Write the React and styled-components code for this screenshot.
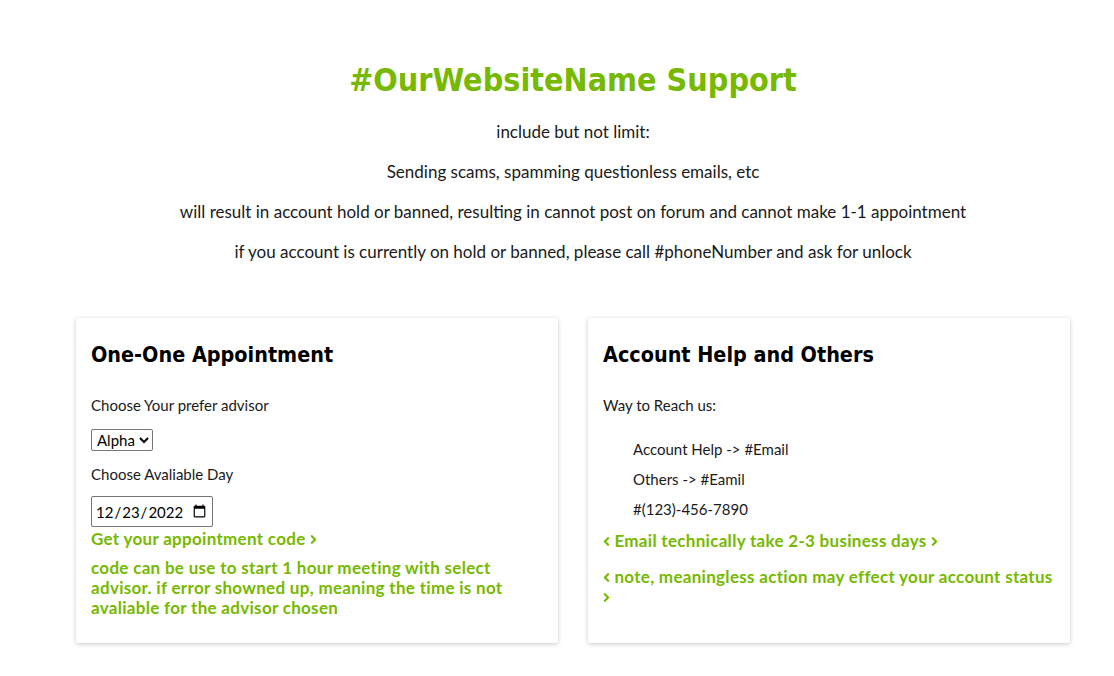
import React from 'react';
import styled, { createGlobalStyle } from 'styled-components';
import { ChevronLeft, ChevronRight } from 'lucide-react';

const GlobalStyle = createGlobalStyle`
  body {
    margin: 0;
    background: #fff;
    font-family: Lato, "Open Sans", sans-serif;
    color: #1a1a1a;
  }
`;

const GREEN = '#76b900';

export default function App() {
  return (
    <Page>
      <GlobalStyle />
      <Main>
        <Intro>
          <Title>#OurWebsiteName Support</Title>
          <Note>include but not limit:</Note>
          <Note>Sending scams, spamming questionless emails, etc</Note>
          <Note>will result in account hold or banned, resulting in cannot post on forum and cannot make 1-1 appointment</Note>
          <Note>if you account is currently on hold or banned, please call #phoneNumber and ask for unlock</Note>
        </Intro>
        <Cards>
          <Card>
            <CardTitle>One-One Appointment</CardTitle>
            <Label>Choose Your prefer advisor</Label>
            <Select defaultValue="Alpha">
              <option>Alpha</option>
              <option>Beta</option>
            </Select>
            <Label $bottom={12}>Choose Avaliable Day</Label>
            <DateInput type="date" defaultValue="2022-12-23" />
            <GreenLink>
              Get your appointment code <ChevronRight size={13} strokeWidth={4} />
            </GreenLink>
            <GreenText>
              code can be use to start 1 hour meeting with select advisor. if error showned up, meaning the time is not avaliable for the advisor chosen
            </GreenText>
          </Card>
          <Card>
            <CardTitle>Account Help and Others</CardTitle>
            <Label>Way to Reach us:</Label>
            <Contacts>
              <li>Account Help -&gt; #Email</li>
              <li>Others -&gt; #Eamil</li>
              <li>#(123)-456-7890</li>
            </Contacts>
            <GreenText $top={12}>
              <ChevronLeft size={13} strokeWidth={4} /> Email technically take 2-3 business days <ChevronRight size={13} strokeWidth={4} />
            </GreenText>
            <GreenText $top={16}>
              <ChevronLeft size={13} strokeWidth={4} /> note, meaningless action may effect your account status <ChevronRight size={13} strokeWidth={4} />
            </GreenText>
          </Card>
        </Cards>
      </Main>
    </Page>
  );
}

const Page = styled.div`
  padding: 60px 0 30px 32px;
`;

const Main = styled.main`
  width: 994px;
  margin: 0 auto;
`;

const Intro = styled.section`
  text-align: center;
`;

const Title = styled.h1`
  margin: 0 0 22px;
  font-family: "DejaVu Sans Condensed", sans-serif;
  font-weight: bold;
  font-size: 32px;
  line-height: 40px;
  color: ${GREEN};
`;

const Note = styled.p`
  margin: 0 0 20px;
  font-size: 17px;
  line-height: 20px;
  color: #1a1a1a;
`;

const Cards = styled.div`
  display: grid;
  grid-template-columns: 1fr 1fr;
  gap: 30px;
  margin-top: 56px;
`;

const Card = styled.div`
  padding: 22px 15px 25px;
  background: #fff;
  box-shadow: 0 1px 4px rgba(0, 0, 0, 0.22);
  border-radius: 2px;
`;

const CardTitle = styled.h2`
  margin: 0 0 25px;
  font-family: "DejaVu Sans Condensed", sans-serif;
  font-weight: bold;
  font-size: 21.4px;
  line-height: 30px;
  color: #000;
`;

const Label = styled.p`
  margin: 0 0 ${p => p.$bottom ?? 14}px;
  font-size: 15px;
  line-height: 20px;
`;

const Select = styled.select`
  display: block;
  margin: 0 0 13px;
  font-family: inherit;
  font-size: 15px;
  height: 22px;
  padding: 0 1px;
  border: 1px solid #767676;
  border-radius: 2px;
  background: #fff;
  color: #000;
`;

const DateInput = styled.input`
  display: block;
  font-family: inherit;
  font-size: 15px;
  height: 31px;
  box-sizing: border-box;
  width: 122px;
  padding: 2px 3px;
  border: 1px solid #767676;
  border-radius: 2px;
  color: #000;
`;

const GreenLink = styled.a`
  display: block;
  margin: 2px 0 9px;
  font-weight: bold;
  font-size: 17px;
  letter-spacing: 0.3px;
  line-height: 20px;
  color: ${GREEN};
  cursor: pointer;

  svg {
    vertical-align: -1px;
    margin: 0 -3px;
  }
`;

const GreenText = styled.p`
  margin: ${p => p.$top || 0}px 0 0;
  font-weight: bold;
  font-size: 17px;
  letter-spacing: 0.3px;
  line-height: 20px;
  color: ${GREEN};

  svg {
    vertical-align: -1px;
    margin: 0 -3px;
  }
`;

const Contacts = styled.ul`
  list-style: none;
  margin: 24px 0 0;
  padding-left: 30px;
  font-size: 15px;
  line-height: 20px;

  li + li {
    margin-top: 10px;
  }
`;
